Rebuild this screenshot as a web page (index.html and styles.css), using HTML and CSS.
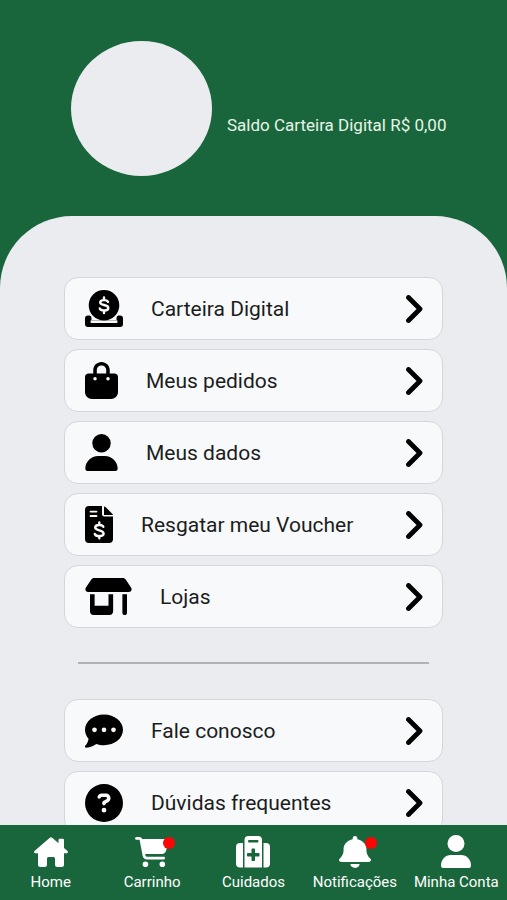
FILE: index.html
```html
<!DOCTYPE html>
<html lang="pt-BR">
<head>
<meta charset="utf-8">
<meta name="viewport" content="width=device-width, initial-scale=1">
<title>Minha Conta</title>
<link rel="stylesheet" href="styles.css">
</head>
<body>
<svg class="defs" aria-hidden="true">
  <symbol id="chevron" viewBox="0 0 17 28"><path d="M2.500 2.500L14 14L2.500 25.500" fill="none" stroke="currentColor" stroke-width="4.800" stroke-linecap="round" stroke-linejoin="round"/></symbol>
  <symbol id="user" viewBox="0 0 448 512"><path d="M224 256A128 128 0 1 0 224 0a128 128 0 1 0 0 256zm-45.700 48C79.800 304 0 383.800 0 482.300C0 498.700 13.300 512 29.700 512H418.300c16.400 0 29.700-13.300 29.700-29.700C448 383.800 368.200 304 269.700 304H178.300z"/></symbol>
</svg>
<div class="app">
  <main class="screen">
    <header class="profile">
      <div class="avatar"></div>
      <p class="balance">Saldo Carteira Digital R$ 0,00</p>
    </header>
    <section class="panel">
      <div class="menu">
        <a class="item" href="#">
          <svg width="38" height="38" viewBox="0 0 38 38" aria-hidden="true">
            <path d="M3 25.500H4.500Q6.500 25.500 6.500 28V30H31.500V28Q31.500 25.500 33.500 25.500H35Q38 25.500 38 28.500V34Q38 37 35 37H3Q0 37 0 34V28.500Q0 25.500 3 25.500Z"/>
            <rect x="5.500" y="30.300" width="27" height="2.600" rx="1" fill="#f7f9fb"/>
            <circle cx="19" cy="15.300" r="15.300"/>
            <path d="M23 11.800C22.300 9.500 15.200 9.300 15.200 12.500C15.200 16 23.300 14 23.300 18C23.300 21.300 15.800 21.200 14.800 18.500M19 7.500V10M19 20.500V23" fill="none" stroke="#f7f9fb" stroke-width="2.400" stroke-linecap="round"/>
          </svg>
          <span class="label">Carteira Digital</span>
          <svg class="chevron" width="17" height="28"><use href="#chevron"/></svg>
        </a>
        <a class="item" href="#">
          <svg width="33" height="37" viewBox="0 0 448 512" preserveAspectRatio="none" aria-hidden="true"><path d="M160 112c0-35.3 28.700-64 64-64s64 28.700 64 64v48H160V112zm-48 48H48c-26.500 0-48 21.500-48 48V416c0 53 43 96 96 96H352c53 0 96-43 96-96V208c0-26.500-21.500-48-48-48H336V112C336 50.100 285.900 0 224 0S112 50.100 112 112v48zm24 48a24 24 0 1 1 0 48 24 24 0 1 1 0-48zm152 24a24 24 0 1 1 48 0 24 24 0 1 1 -48 0z"/></svg>
          <span class="label">Meus pedidos</span>
          <svg class="chevron" width="17" height="28"><use href="#chevron"/></svg>
        </a>
        <a class="item" href="#">
          <svg width="33" height="37" aria-hidden="true"><use href="#user"/></svg>
          <span class="label">Meus dados</span>
          <svg class="chevron" width="17" height="28"><use href="#chevron"/></svg>
        </a>
        <a class="item" href="#">
          <svg width="28" height="37" viewBox="0 0 28 37" aria-hidden="true">
            <path d="M4 0H17V8Q17 10.500 19.500 10.500H28V33Q28 37 24 37H4Q0 37 0 33V4Q0 0 4 0Z"/>
            <path d="M19 0.500Q20 0.500 21 1.500L27 7.500Q28 8.500 28 9H19Z"/>
            <path d="M5.500 5.600H11.500M5.500 10H11.500" stroke="#f7f9fb" stroke-width="1.800" stroke-linecap="round"/>
            <path d="M18.300 20.800C17.300 18.300 10.200 18.300 10.200 21.600C10.200 25.300 18.600 23.500 18.600 27.500C18.600 31 10.800 30.800 9.800 28M14.300 16.500V19M14.300 30V32.300" fill="none" stroke="#f7f9fb" stroke-width="2.400" stroke-linecap="round"/>
          </svg>
          <span class="label">Resgatar meu Voucher</span>
          <svg class="chevron" width="17" height="28"><use href="#chevron"/></svg>
        </a>
        <a class="item" href="#">
          <svg width="47" height="37" viewBox="0 0 640 512" aria-hidden="true"><path d="M36.800 192H603.200c20.300 0 36.800-16.500 36.800-36.800c0-7.300-2.200-14.400-6.200-20.400L558.200 21.400C549.300 8 534.400 0 518.300 0H121.700c-16 0-31 8-39.900 21.400L6.200 134.700c-4 6.100-6.200 13.200-6.200 20.400C0 175.500 16.500 192 36.800 192zM64 224V384v80c0 26.500 21.500 48 48 48H336c26.500 0 48-21.500 48-48V384 224H320V384H128V224H64zm448 0V480c0 17.700 14.300 32 32 32s32-14.300 32-32V224H512z"/></svg>
          <span class="label">Lojas</span>
          <svg class="chevron" width="17" height="28"><use href="#chevron"/></svg>
        </a>
      </div>
      <hr class="divider">
      <div class="menu">
        <a class="item" href="#">
          <svg width="38" height="38" viewBox="0 0 512 512" aria-hidden="true"><path d="M256 448c141.400 0 256-93.100 256-208S397.400 32 256 32S0 125.100 0 240c0 45.100 17.700 86.800 47.700 120.900c-1.900 24.500-11.400 46.300-21.400 62.900c-5.500 9.200-11.100 16.600-15.200 21.600c-2.100 2.500-3.700 4.400-4.900 5.700l-1.600 1.700c-4.600 4.600-5.900 11.400-3.400 17.400c2.500 6 8.300 9.900 14.800 9.900c28.700 0 57.600-8.900 81.600-19.300c22.900-10 42.400-21.900 54.300-30.600c31.800 11.500 67 17.900 104.100 17.900zM128 208a32 32 0 1 1 0 64 32 32 0 1 1 0-64zm128 0a32 32 0 1 1 0 64 32 32 0 1 1 0-64zm96 32a32 32 0 1 1 64 0 32 32 0 1 1 -64 0z"/></svg>
          <span class="label">Fale conosco</span>
          <svg class="chevron" width="17" height="28"><use href="#chevron"/></svg>
        </a>
        <a class="item" href="#">
          <svg width="38" height="38" viewBox="0 0 512 512" aria-hidden="true"><path d="M256 512A256 256 0 1 0 256 0a256 256 0 1 0 0 512zM169.800 165.300c7.900-22.300 29.100-37.300 52.800-37.300h58.300c34.900 0 63.100 28.300 63.100 63.100c0 22.600-12.100 43.500-31.700 54.800L280 264.400c-.2 13-10.900 23.600-24 23.600c-13.300 0-24-10.700-24-24V250.500c0-8.600 4.600-16.500 12.100-20.800l44.300-25.400c4.700-2.700 7.600-7.700 7.600-13.100c0-8.400-6.800-15.100-15.100-15.100H222.600c-3.400 0-6.400 2.100-7.500 5.300l-.4 1.200c-4.400 12.500-18.200 19-30.600 14.600s-19-18.200-14.600-30.600l.4-1.200zM224 352a32 32 0 1 1 64 0 32 32 0 1 1 -64 0z"/></svg>
          <span class="label">Dúvidas frequentes</span>
          <svg class="chevron" width="17" height="28"><use href="#chevron"/></svg>
        </a>
      </div>
    </section>
  </main>
  <nav class="tabs">
    <a class="tab" href="#">
      <span class="tab-icon"><svg width="34" height="30" viewBox="0 0 34 30" aria-hidden="true"><path d="M15.500 1Q17 -0.300 18.500 1L24.500 6.200V3Q24.500 1.700 25.800 1.700H28.700Q30 1.700 30 3V11L33.500 14Q34.500 15.200 33 16.200H30V27.500Q30 30 27.500 30H23.500Q21 30 21 27.500V21.500Q21 20 19.500 20H14.500Q13 20 13 21.500V27.500Q13 30 10.500 30H6.500Q4 30 4 27.500V16.200H1Q-0.500 15.200 0.500 14Z"/></svg></span>
      <span>Home</span>
    </a>
    <a class="tab" href="#">
      <span class="tab-icon"><svg width="34" height="30" viewBox="0 0 576 512" aria-hidden="true"><path d="M0 24C0 10.700 10.700 0 24 0H69.500c22 0 41.500 12.800 50.600 32h411c26.300 0 45.500 25 38.600 50.400l-41 152.300c-8.500 31.400-37 53.300-69.500 53.300H170.700l5.400 28.500c2.200 11.300 12.100 19.500 23.600 19.500H488c13.300 0 24 10.700 24 24s-10.700 24-24 24H199.700c-34.600 0-64.300-24.600-70.700-58.500L77.400 54.500c-.7-3.800-4-6.500-7.900-6.500H24C10.700 48 0 37.300 0 24zM128 464a48 48 0 1 1 96 0 48 48 0 1 1 -96 0zm336-48a48 48 0 1 1 0 96 48 48 0 1 1 0-96z"/></svg><i class="badge"></i></span>
      <span>Carrinho</span>
    </a>
    <a class="tab" href="#">
      <span class="tab-icon"><svg width="34" height="32" viewBox="0 0 34 32" aria-hidden="true"><path d="M7 7V31.500H4Q0 31.500 0 27.500V11Q0 7 4 7ZM27.500 7H30Q34 7 34 11V27.500Q34 31.500 30 31.500H27.500Z"/><path fill-rule="evenodd" d="M12.500 0H22Q26 0 26 4V31.500H8.500V4Q8.500 0 12.500 0ZM13 4Q12 4 12 5.200T13 6.500H21.500Q22.500 6.500 22.500 5.200T21.500 4ZM16.300 12.500Q15.500 12.500 15.500 13.300V17H11.800Q11 17 11 17.800V19.700Q11 20.500 11.800 20.500H15.500V24.200Q15.500 25 16.300 25H18.200Q19 25 19 24.200V20.500H22.700Q23.500 20.500 23.500 19.700V17.800Q23.500 17 22.700 17H19V13.300Q19 12.500 18.200 12.500Z"/></svg></span>
      <span>Cuidados</span>
    </a>
    <a class="tab" href="#">
      <span class="tab-icon"><svg width="32" height="32" viewBox="0 0 448 512" preserveAspectRatio="none" aria-hidden="true"><path d="M224 0c-17.700 0-32 14.300-32 32V51.200C119 66 64 130.600 64 208v18.800c0 47-17.300 92.400-48.500 127.600l-7.400 8.300c-8.400 9.400-10.400 22.900-5.300 34.400S19.400 416 32 416H416c12.600 0 24-7.400 29.200-18.900s3.100-25-5.300-34.400l-7.400-8.300C401.300 319.200 384 273.900 384 226.800V208c0-77.400-55-142-128-156.800V32c0-17.700-14.300-32-32-32zm45.300 493.300c12-12 18.700-28.300 18.700-45.300H224 160c0 17 6.700 33.300 18.700 45.300s28.300 18.700 45.300 18.700s33.300-6.700 45.300-18.700z"/></svg><i class="badge"></i></span>
      <span>Notificações</span>
    </a>
    <a class="tab" href="#">
      <span class="tab-icon"><svg width="32" height="33" viewBox="0 0 32 33" aria-hidden="true"><circle cx="16" cy="8.500" r="8.500"/><path d="M11 20H21C27 20 31 25 31 30.500Q31 33 29 33H3Q1 33 1 30.500C1 25 5 20 11 20Z"/></svg></span>
      <span>Minha Conta</span>
    </a>
  </nav>
</div>
</body>
</html>
```
FILE: styles.css
```css
* { box-sizing: border-box; }

body {
  margin: 0;
  font-family: Roboto, "Liberation Sans", sans-serif;
  background: #1a663c;
}

a { color: inherit; text-decoration: none; }
svg { display: block; flex: none; fill: currentColor; }
.defs { position: absolute; width: 0; height: 0; }

.app {
  display: flex;
  flex-direction: column;
  height: 100vh;
}

.screen {
  flex: 1;
  min-height: 0;
  overflow-y: auto;
  scrollbar-width: none;
}

.profile {
  display: flex;
  align-items: center;
  gap: 15px;
  padding: 41px 24px 40px 71px;
  color: #e6f5e8;
}

.avatar {
  flex: none;
  width: 141px;
  height: 135px;
  border-radius: 50%;
  background: #eaecf0;
}

.balance {
  margin: 0;
  padding-top: 32px;
  font-size: 17px;
  line-height: 24px;
}

.panel {
  padding: 61px 64px 24px;
  border-radius: 72px 72px 0 0;
  background: #eaecf0;
}

.menu {
  display: flex;
  flex-direction: column;
  gap: 9px;
}

.item {
  display: flex;
  align-items: center;
  gap: 28px;
  height: 63px;
  padding: 0 19px 0 20px;
  border: 1px solid #d3d6dc;
  border-radius: 14px;
  background: #f7f9fb;
  color: #000;
}

.label {
  flex: 1;
  font-size: 21px;
  line-height: 24px;
  color: #1c1d20;
}

.divider {
  height: 2px;
  margin: 34px 14px 35px;
  border: 0;
  background: #adb3ba;
}

.tabs {
  display: grid;
  grid-template-columns: repeat(5, 1fr);
  padding: 10px 0 9px;
  background: #1a663c;
  color: #fff;
}

.tab {
  display: flex;
  flex-direction: column;
  align-items: center;
  gap: 5px;
  font-size: 15px;
  line-height: 18px;
  white-space: nowrap;
}

.tab-icon {
  position: relative;
  display: flex;
  align-items: center;
  height: 33px;
}

.badge {
  position: absolute;
  top: 2px;
  right: -6px;
  width: 12px;
  height: 12px;
  border-radius: 50%;
  background: #fb0505;
}
```
